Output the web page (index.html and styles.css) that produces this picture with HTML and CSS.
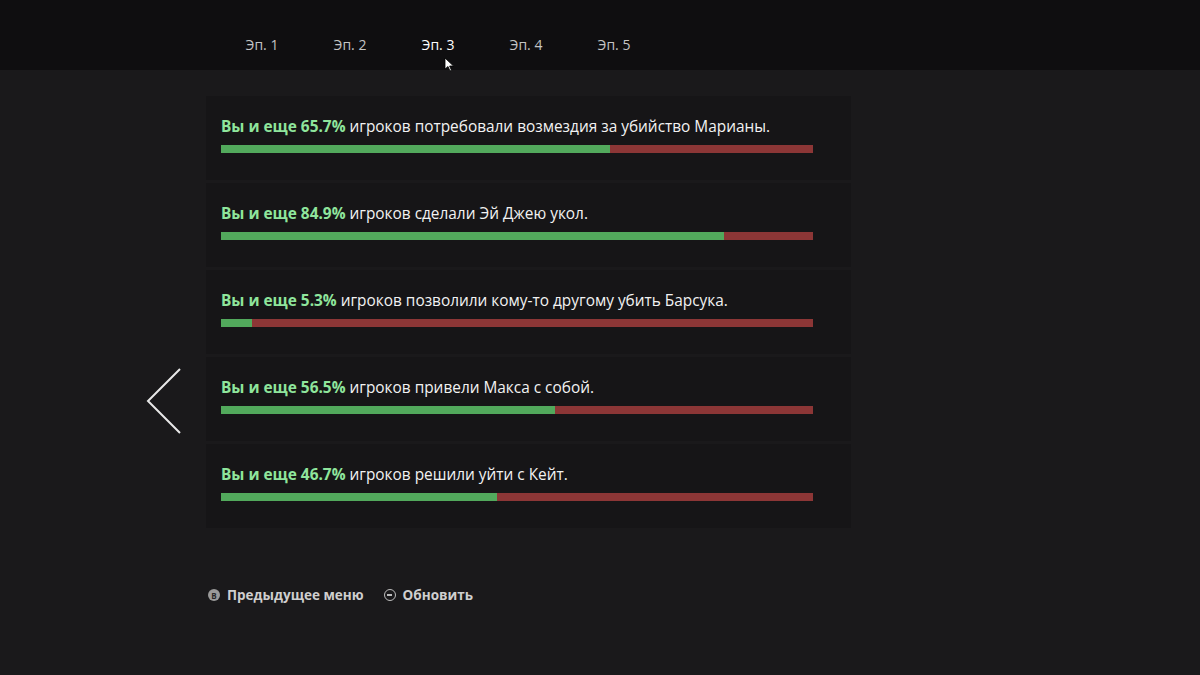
FILE: index.html
```html
<!DOCTYPE html>
<html lang="ru">
<head>
<meta charset="utf-8">
<link rel="stylesheet" href="styles.css">
</head>
<body>
<header class="topbar">
  <nav class="tabs">
    <span class="tab">Эп. 1</span>
    <span class="tab">Эп. 2</span>
    <span class="tab active">Эп. 3</span>
    <span class="tab">Эп. 4</span>
    <span class="tab">Эп. 5</span>
  </nav>
  <svg class="cursor" width="12" height="16" viewBox="0 0 12 16"><path d="M1 1 L1 12 L4 9.5 L6 14 L7.5 13.3 L5.6 9 L9.5 9 Z" fill="#fff" stroke="#000" stroke-width="0.8"/></svg>
</header>
<main class="main">
  <div class="arrow">
    <svg width="36" height="68" viewBox="0 0 36 68"><polyline points="34,2 2,34 34,66" fill="none" stroke="#e8e8e8" stroke-width="2"/></svg>
  </div>
  <section class="list">
    <div class="card">
      <p class="line"><b>Вы и еще 65.7%</b> игроков потребовали возмездия за убийство Марианы.</p>
      <div class="bar"><div class="fill" style="width:65.7%"></div></div>
    </div>
    <div class="card">
      <p class="line"><b>Вы и еще 84.9%</b> игроков сделали Эй Джею укол.</p>
      <div class="bar"><div class="fill" style="width:84.9%"></div></div>
    </div>
    <div class="card">
      <p class="line"><b>Вы и еще 5.3%</b> игроков позволили кому-то другому убить Барсука.</p>
      <div class="bar"><div class="fill" style="width:5.3%"></div></div>
    </div>
    <div class="card">
      <p class="line"><b>Вы и еще 56.5%</b> игроков привели Макса с собой.</p>
      <div class="bar"><div class="fill" style="width:56.5%"></div></div>
    </div>
    <div class="card">
      <p class="line"><b>Вы и еще 46.7%</b> игроков решили уйти с Кейт.</p>
      <div class="bar"><div class="fill" style="width:46.7%"></div></div>
    </div>
  </section>
</main>
<footer class="footer">
  <span class="hint"><span class="btn btn-b">B</span>Предыдущее меню</span>
  <span class="hint"><span class="btn btn-ring"><span class="dash"></span></span>Обновить</span>
</footer>
</body>
</html>
```
FILE: styles.css
```css
* { box-sizing: border-box; }
html, body { margin: 0; padding: 0; }
body {
  width: 1200px;
  height: 675px;
  background: #1a191b;
  font-family: "Open Sans", "Noto Sans", sans-serif;
  color: #ececec;
  overflow: hidden;
}
.topbar {
  position: relative;
  height: 70px;
  background: #0f0e10;
  padding-left: 218px;
}
.tabs {
  display: flex;
  height: 70px;
  align-items: center;
  padding-top: 18px;
}
.tab {
  width: 88px;
  text-align: center;
  font-size: 14px;
  color: #c4c4c4;
}
.tab.active { color: #ffffff; }
.cursor {
  position: absolute;
  left: 444px;
  top: 57px;
}
.main {
  display: flex;
  padding-top: 26px;
  padding-left: 146px;
}
.arrow {
  width: 60px;
  padding-top: 271px;
}
.list {
  display: flex;
  flex-direction: column;
  gap: 3px;
  width: 645px;
}
.card {
  height: 84px;
  background: #161517;
  padding: 18px 37px 0 15px;
}
.line {
  margin: 0;
  font-size: 15.4px;
  line-height: 25px;
  color: #f2f2f2;
  white-space: nowrap;
}
.line b {
  color: #8fe59c;
  font-weight: 700;
}
.bar {
  margin-top: 6px;
  height: 8px;
  background: #8c3636;
  width: 592px;
}
.fill {
  height: 100%;
  background: #52a95c;
}
.footer {
  display: flex;
  gap: 20px;
  padding-left: 208px;
  padding-top: 58px;
}
.hint {
  display: flex;
  align-items: center;
  gap: 7px;
  font-size: 13.5px;
  font-weight: 700;
  color: #cfcfcf;
}
.btn {
  width: 12px;
  height: 12px;
  border-radius: 50%;
  display: inline-flex;
  align-items: center;
  justify-content: center;
}
.btn-b {
  background: #9a9a9a;
  color: #2a2a2a;
  font-size: 8px;
  font-weight: 700;
}
.btn-ring {
  border: 1.5px solid #bdbdbd;
}
.dash {
  width: 5px;
  height: 1.5px;
  background: #bdbdbd;
}
```
